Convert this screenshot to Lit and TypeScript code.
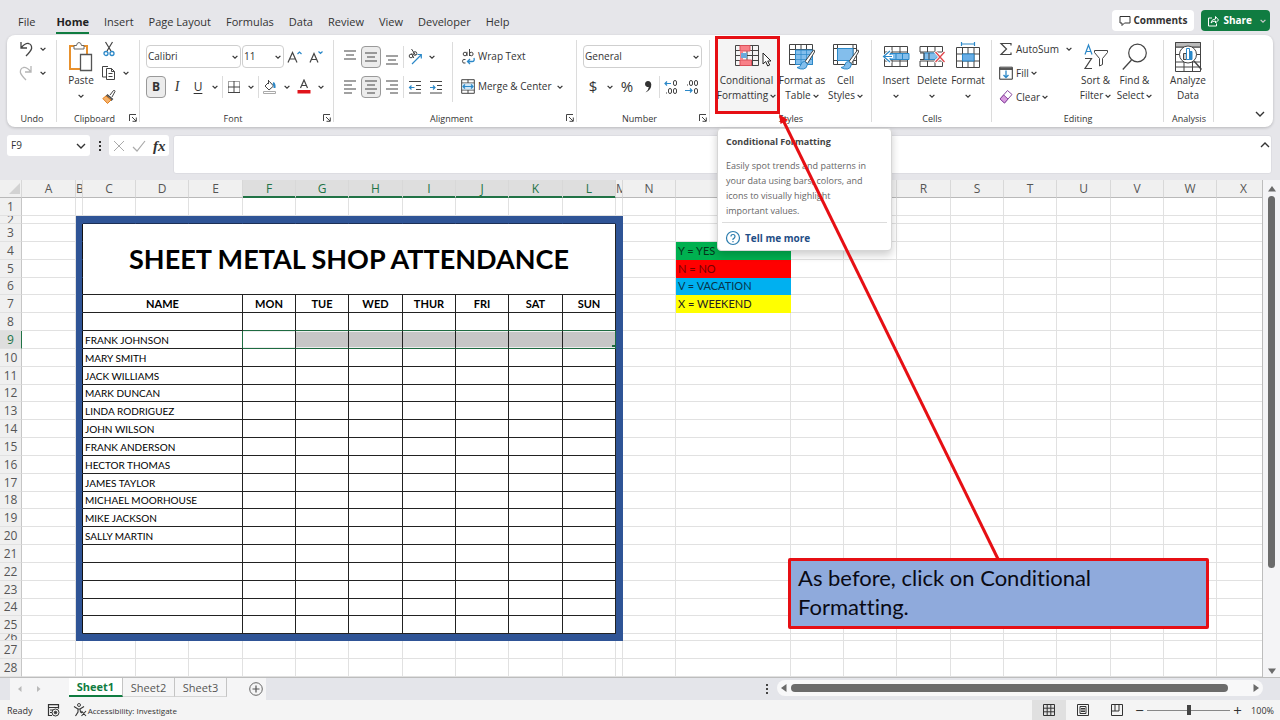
import { LitElement, html, svg, css, nothing, TemplateResult } from "lit";
import { customElement, state } from "lit/decorators.js";
import { classMap } from "lit/directives/class-map.js";

const INK = "#444";
const BLUE = "#2b88c8";
const SKY = "#83beec";

const icon = (w: number, h: number, body: unknown) => html`
  <svg width=${w} height=${h} viewBox="0 0 ${w} ${h}" fill="none" stroke=${INK} stroke-width="1" aria-hidden="true">${body}</svg>`;

const chevron = (w = 6) => html`
  <svg width=${w} height=${w} viewBox="0 0 6 6" fill="none" stroke="#333" stroke-width=${w > 6 ? 0.8 : 1.2} aria-hidden="true">
    <path d="M.6 1.8 3 4.2 5.4 1.8" />
  </svg>`;

const lines = (rows: number[][]) =>
  icon(14, 16, svg`<path stroke-width="1.2" d=${rows.map(([x, y, w]) => `M${x} ${y}h${w}`).join("")} />`);

const grid24 = svg`<path d="M.5 .5h23v20H.5zM.5 5.5h23M.5 10.5h23M.5 15.5h23M6.5 .5v20M12 .5v20M17.5 .5v20" />`;
const brush = svg`
  <path d="M24.500 6 L16 17.500 L18.500 19.500 L25.500 8 Q25.800 5.500 24.500 6z" fill="#fff" />
  <path d="M15.500 17.500q-3 0-3.500 3t-4 3q3 2 6.500 1.500t4-5z" fill="${SKY}" stroke="${BLUE}" />`;

const ICONS: Record<string, TemplateResult> = {
  undo: icon(16, 18, svg`<path stroke-width="1.3" d="M3 2v6h6M3.300 7.800Q7 3 10.500 3.500 14 4.500 13.600 8.500 13 11 8 16" />`),
  redo: icon(16, 18, svg`<path stroke="#b5b5b5" stroke-width="1.3" d="M13 2v6H7M12.700 7.800Q9 3 5.500 3.500 2 4.500 2.400 8.500 3 11 8 16" />`),
  paste: icon(26, 30, svg`
    <path d="M2 4h17v23H2z" fill="#fff" stroke="#e8912d" stroke-width="2" />
    <path d="M6 7V3.500h2.500q.5-3 2.500-3t2.500 3H16V7z" fill="#fff" stroke="#666" />
    <path d="M12.500 12.500h11v16h-11z" fill="#fff" stroke="#555" stroke-width="1.300" />`),
  cut: icon(12, 16, svg`<path stroke-width="1.200" d="M2.500 1 8 10M9.500 1 4 10" /><circle cx="3" cy="12.500" r="2" stroke="${BLUE}" stroke-width="1.300" /><circle cx="9" cy="12.500" r="2" stroke="${BLUE}" stroke-width="1.300" />`),
  copy: icon(16, 16, svg`<path d="M5 12H1.500V1.500h5.500M5.500 3.500h5l3 3v8h-8zM10.500 3.500v3h3M7.500 8.500h4M7.500 11.500h4" fill="#fff" />`),
  painter: icon(14, 16, svg`<path d="m8 6 3.500-4.500q1.500-.5 1.500 1L10 8" fill="#fff" /><path d="m5 5.500 6 5M4 6.500 10 11.500" stroke-width="1.200" /><path d="M4 7 .8 9.500l4.700 5L9 11z" fill="#f6b26b" stroke="#e07f1f" />`),
  growA: icon(18, 18, svg`<path stroke-width="1.200" d="M2 14.500 6.500 4.500 11 14.500M3.600 11h5.800" /><path stroke="${BLUE}" stroke-width="1.200" d="m11.500 6 2-2 2 2" />`),
  shrinkA: icon(18, 18, svg`<path stroke-width="1.200" d="M3 14.500 7 5.500 11 14.500M4.400 11.500h5.200" /><path stroke="${BLUE}" stroke-width="1.200" d="m11.500 3.500 2 2 2-2" />`),
  borders: icon(14, 14, svg`<path stroke-dasharray="1 1" d="M1.500 1.500h11v11h-11z" /><path d="M7 1v12M1 7h12M1 12.500h12" />`),
  fillColor: icon(16, 16, svg`<path d="m3 7 4.500-4.500L11.500 7 7 11zM6.500 1v4" fill="#fff" /><path d="M11 4q2 1 1.500 5" stroke="${BLUE}" stroke-width="2" /><path d="M1.500 12.500h12v2h-12z" fill="#fff" stroke="#aaa" />`),
  fontColor: icon(14, 16, svg`<path stroke-width="1.200" d="M3.500 9 7 1 10.500 9M4.700 6.500h4.600" /><path d="M.5 11h13v3.500H.5z" fill="#e0141b" stroke="none" />`),
  top: lines([[1, 2, 12], [3, 6, 8], [1, 10, 12]]),
  middle: lines([[1, 4, 12], [3, 8, 8], [1, 12, 12]]),
  bottom: lines([[1, 7, 12], [3, 11, 8], [1, 15, 12]]),
  left: lines([[1, 2, 12], [1, 6, 8], [1, 10, 12], [1, 14, 8]]),
  center: lines([[1, 2, 12], [3, 6, 8], [1, 10, 12], [3, 14, 8]]),
  right: lines([[1, 2, 12], [5, 6, 8], [1, 10, 12], [5, 14, 8]]),
  orient: icon(16, 16, svg`<circle cx="4" cy="7" r="1.800" /><path d="M4.500 4.500 6.800 9" /><circle cx="8" cy="4.500" r="1.800" /><path d="M4.500 0 8.500 6" /><path stroke="${BLUE}" stroke-width="1.200" d="M5 15 14 6M10.500 5.500H14.300V9.500" />`),
  outdent: icon(14, 14, svg`<path d="M1 1.500h12M8 5.500h5M8 9.500h5M1 13h12" /><path stroke="${BLUE}" stroke-width="1.200" d="M6.500 7.500H1.500M3.500 5.500l-2 2 2 2" />`),
  indent: icon(14, 14, svg`<path d="M1 1.500h12M8 5.500h5M8 9.500h5M1 13h12" /><path stroke="${BLUE}" stroke-width="1.200" d="M1 7.500h5M4 5.500l2 2-2 2" />`),
  wrap: icon(16, 16, svg`<circle cx="5" cy="5" r="1.800" /><path d="M7 2.800V7M9.500 0v7M5.500 10.500q-3-1-3 1.700t3 1.800" /><circle cx="11.300" cy="5" r="1.800" /><path stroke="${BLUE}" stroke-width="1.300" d="M14 9q1 3.500-2 3.500H8M10 10l-2.500 2.500L10 15" />`),
  merge: icon(14, 15, svg`<path d="M.7.700h12.600v13.600H.7zM.7 4h12.600M.7 11h12.600M7 .7V4M7 11v3.300" /><path d="M1.200 4.500h11.600v6H1.200z" fill="#cfe6f7" stroke="none" /><path stroke="${BLUE}" stroke-width="1.200" d="M2 7.500h10M4 5.500l-2 2 2 2M10 5.500l2 2-2 2" />`),
  incDec: icon(16, 16, svg`<path stroke="${BLUE}" stroke-width="1.200" d="M8 4.500H2M4 2.500l-2 2 2 2" /><rect x="10.500" y="1.500" width="3" height="5" rx="1.500" /><rect x="5.500" y="9.500" width="3" height="5" rx="1.500" /><rect x="10.500" y="9.500" width="3" height="5" rx="1.500" /><path d="M3 14h1" />`),
  decDec: icon(16, 16, svg`<path stroke="${BLUE}" stroke-width="1.200" d="M1 11.500h7M6 9.500l2 2-2 2" /><rect x="5.500" y="1.500" width="3" height="5" rx="1.500" /><rect x="10.500" y="1.500" width="3" height="5" rx="1.500" /><rect x="10.500" y="9.500" width="3" height="5" rx="1.500" /><path d="M3 6h1" />`),
  comma: icon(8, 14, svg`<path d="M4 1a3 3 0 1 0 .8 5.900Q4.500 10 1.500 12.500 7.500 10 7.300 4.500 7 1 4 1z" fill="#333" stroke="none" />`),
  conditional: icon(24, 24, svg`${grid24}<path d="M5 .5h10V6H5zM5 15h11.500v5.500H5z" fill="#f98088" stroke="#d9505a" /><path d="M5 6h3v9H5z" fill="#f98088" stroke="none" /><path d="M6 8h6v5H6z" fill="#6aa9dc" stroke="none" />`),
  formatTable: icon(26, 26, svg`${grid24}<path d="M6.500 6h17v14.500h-17z" fill="${SKY}" stroke="${BLUE}" /><path d="M12 6v14M17.500 6v14M6.500 10.500h17M6.500 15.500h17" stroke="${BLUE}" stroke-width=".7" />${brush}`),
  cellStyles: icon(26, 26, svg`<path d="M.5.500h23v20H.5zM4.500.500v20M20 .5v20M.5 4.500h23M.5 16.500h23" /><path d="M4.500 4.500H20v12H4.500z" fill="${SKY}" stroke="${BLUE}" />${brush}`),
  insert: icon(28, 22, svg`<path d="M2.500.500h23v20h-23zM2.500 6h23M2.500 15h23M10 .5v20M18 .5v20" /><path d="M8 7.500h19v6H8z" fill="${SKY}" stroke="${BLUE}" /><path d="M14 7.500v6M20.500 7.500v6" stroke="${BLUE}" /><path d="M9 4 2 10.500 9 17M2 10.500h9" stroke="#fff" stroke-width="3" /><path d="M8 5 1.500 10.500 8 16M1.500 10.500H10" stroke="${BLUE}" stroke-width="1.200" />`),
  remove: icon(28, 22, svg`<path d="M2 6V.5h22.500V6zM2 15v5.500h22.500V15zM9.500.500V6M17 .5V6M9.500 15v5.500M17 15v5.500" /><path d="M6 7h11l3 3.500-3 3H6z" fill="${SKY}" stroke="${BLUE}" /><path d="M11 7v6.500M2 7h4v6.500H2" /><path d="m17 5.500 10 11M27 5.500l-10 11" stroke="#fff" stroke-width="3" /><path d="m17.500 6 9 10M26.500 6l-9 10" stroke="#e0474c" stroke-width="1.300" />`),
  format: icon(26, 30, svg`<path d="M6.500 2h13M6.500 0v4M19.500 0v4" stroke="${BLUE}" stroke-width="1.200" /><path d="M1.500 5.500h23v20h-23zM1.500 12h23M1.500 19h23M7.500 5.500v20M19 5.500v20M13 5.500V12M13 19v6.500" /><path d="M7.500 12H19v7H7.500z" fill="#6aaee6" stroke="${BLUE}" />`),
  sum: icon(14, 14, svg`<path stroke-width="1.200" d="M12 3.500V1.500H2L7.500 7 2 12.500h10v-2" />`),
  fillDown: icon(14, 14, svg`<path d="M.7 1.200h12.600v12H.7z" stroke="#333" /><path d="M.7 3h12.600" stroke-width="1.800" /><path stroke="${BLUE}" stroke-width="1.300" d="M7 4.500v7M4.500 9 7 11.500 9.500 9" />`),
  clear: icon(14, 16, svg`<path d="m1 10 7.500-8.500 4.500 4L5.500 14z" fill="#fff" stroke="#8a4aa0" /><path d="m1 10 3.700-4L9 10l-3.500 4z" fill="#d99ae0" stroke="#8a4aa0" />`),
  sort: icon(26, 28, svg`<path stroke="${BLUE}" stroke-width="1.200" d="M2 11.500 5.500 2 9 11.500M3.200 8.500h4.600" /><path stroke-width="1.200" d="M2 15.500h6.500L2 25.500h7" /><path d="M11.500 7.500h13v2l-5 6v6l-3 1.500v-7.500l-5-6z" fill="#fff" />`),
  find: icon(26, 28, svg`<circle cx="15.500" cy="10" r="8.800" stroke-width="1.200" /><path stroke-width="1.300" d="M9.500 17 .8 26.500" />`),
  analyze: icon(28, 30, svg`<path d="M1.500.500h25v29h-25zM1.500 5h25M1.500 12.500h25M1.500 20h25M1.500 25h25M10 20v9.500M18.500 20v9.500" /><path d="M1.500.500h25V5h-25z" fill="#bbb" /><circle cx="14" cy="12.500" r="8.500" fill="#fff" /><path d="M9.500 11.500h3v6h-3z" fill="#ccc" /><path d="M12.500 6.500h3v11h-3z" fill="#fff" stroke="${BLUE}" /><path d="M15.500 9.500H18v8h-2.500z" fill="${BLUE}" stroke="${BLUE}" /><path stroke-width="1.400" d="m20 19 7.500 8.500" />`),
  launcher: icon(8, 8, svg`<path d="M.5 7V.5H7M3 3l4 4M7.300 3.500v3.800H3.500" />`),
  help: icon(16, 16, svg`<circle cx="8" cy="8" r="6.500" stroke="#2b7cad" stroke-width="1.200" /><path stroke="#2b7cad" stroke-width="1.200" d="M6 6.500Q6 4.500 8 4.500t2 2Q10 8 8 9v1M8 11v1.300" />`),
  pointer: icon(10, 15, svg`<path d="M1 1v11l2.700-2.500L5.700 14l2-1-2-4H9z" fill="#fff" stroke="#222" />`),
  comment: icon(12, 12, svg`<path d="M1 1.500h10v6.500H5.500L3 10.500V8H1z" stroke="#333" />`),
  share: icon(12, 12, svg`<path stroke="#fff" d="M5 3H1.500v8h8V8.500M4 8q.5-4 4.500-4V1.500L11.500 5 8.500 8V6Q5.500 6 4 8z" />`),
  cross: icon(12, 12, svg`<path stroke="#aaa" d="m1 1 10 10M11 1 1 11" />`),
  tick: icon(14, 12, svg`<path stroke="#aaa" stroke-width="1.200" d="m1 7 4 4L13 1" />`),
  record: icon(13, 13, svg`<path d="M5 11.500H1.500V.700h10v4M1.500 3.500h10M3 6h3M3 8.500h2" stroke="#333" stroke-width="1.200" /><circle cx="8.500" cy="8.500" r="3.500" stroke="#333" /><circle cx="8.500" cy="8.500" r="1.300" fill="#333" />`),
  access: icon(14, 14, svg`<circle cx="6" cy="2" r="1.500" /><path stroke="#333" stroke-width="1.100" d="M1 3.500 5 6v3L2.500 13M11 3.500 7 6l.500 3L9 10M5 6h2M8.500 8l4.500 5M13 8l-4.500 5" />`),
  add: icon(14, 14, svg`<circle cx="7" cy="7" r="6.300" stroke="#666" /><path stroke="#555" stroke-width="1.200" d="M7 3.500v7M3.500 7h7" />`),
  viewNormal: icon(12, 12, svg`<path stroke="#333" d="M.5.500h11v11H.5zM.5 4.200h11M.5 7.800h11M4.200.500v11M7.800.500v11" />`),
  viewPage: icon(12, 12, svg`<path stroke="#333" d="M.5.500h11v11H.5zM3 2.500h6v7H3zM4 4.500h4M4 6h4M4 7.500h4" />`),
  viewBreak: icon(12, 12, svg`<path stroke="#333" d="M.5.500h11v11H.5zM4 .5V7M8 .5V7M.5 7H8" />`),
};

const COLS = "ABCDEFGHIJKLMNOPQRSTUVWXYZ".split("");
const COL_W: Record<string, number> = {
  A: 54, B: 7, C: 53, D: 53, E: 54, F: 53, G: 53, H: 54, I: 53, J: 53, K: 54, L: 53, M: 7, N: 53, O: 115,
};
const DAYS: Record<string, string> = { F: "MON", G: "TUE", H: "WED", I: "THUR", J: "FRI", K: "SAT", L: "SUN" };
const NAMES = [
  "FRANK JOHNSON", "MARY SMITH", "JACK WILLIAMS", "MARK DUNCAN", "LINDA RODRIGUEZ", "JOHN WILSON",
  "FRANK ANDERSON", "HECTOR THOMAS", "JAMES TAYLOR", "MICHAEL MOORHOUSE", "MIKE JACKSON", "SALLY MARTIN",
];
const LEGEND: Record<number, [string, string]> = {
  4: ["Y = YES", "yes"], 5: ["N = NO", "no"], 6: ["V = VACATION", "vac"], 7: ["X = WEEKEND", "wkd"],
};

const rowHeight = (r: number) => {
  if (r === 1) return 18;
  if (r === 2) return 8;
  if (r === 26) return 7;
  const k = r < 26 ? r - 2 : r - 3;
  return Math.round(17.84 * k) - Math.round(17.84 * (k - 1));
};

@customElement("sheet-grid")
export class SheetGrid extends LitElement {
  static styles = css`
    :host { display: block; overflow: hidden; background: #fff; font-family: "Lato", "Liberation Sans", sans-serif; }
    table { table-layout: fixed; border-collapse: separate; border-spacing: 0; }
    th, td { padding: 0; box-sizing: border-box; border: 0 solid #e1e1e1; border-width: 0 1px 1px 0; overflow: hidden; white-space: nowrap; }
    .col, .num { font: 400 12px/16px "Open Sans", "Noto Sans", sans-serif; color: #555; background: #f0f0f0; text-align: center; }
    .col { height: 18px; border-bottom-color: #b9b9b9; border-right-color: #d8d8d8; }
    .col.on { background: #dedede; color: #217346; border-bottom-color: #217346; box-shadow: inset 0 -1px #217346; }
    .num { border-right-color: #c6c6c6; }
    .num.on { background: #dedede; color: #217346; border-right-color: #217346; }
    .clip { display: flex; align-items: center; justify-content: center; overflow: hidden; }
    .corner { background: #f0f0f0; }
    .corner svg { display: block; margin-left: auto; }
    .blue { background: #2f5496; border-color: #2f5496; }
    .edge { border-right-color: #111; }
    .over { border-bottom-color: #1c2f55; }
    .box { border-color: #222; font-size: 11px; line-height: 16px; color: #000; }
    .name { padding-left: 2px; text-align: left; font-size: 10px; }
    .day { text-align: center; font-weight: 700; }
    .title { font-size: 27px; line-height: 36px; font-weight: 700; text-align: center; color: #000; border-color: #222; }
    .below { border-bottom-color: #1e6b41; }
    .sel { background: #c6c6c6; border-bottom-color: #1e6b41; box-shadow: inset 0 1px #eee, inset 0 -1px #eee; }
    .first { background: #fff; }
    .before { border-right-color: #1e6b41; }
    .key { padding-left: 2px; font-size: 11px; line-height: 16px; color: #222; border-color: transparent; background-clip: border-box; }
    .yes { background: #00b050; color: #04351b; }
    .no { background: #f00; color: #700; }
    .vac { background: #00b0f0; color: #08344a; }
    .wkd { background: #ff0; }
    .last { border-right-color: #1e6b41; background: linear-gradient(#1e6b41, #1e6b41) right bottom / 3px 3px no-repeat #c6c6c6; }
  `;

  @state() private width = window.innerWidth;
  @state() private height = window.innerHeight;
  private onResize = () => { this.width = window.innerWidth; this.height = window.innerHeight; };
  connectedCallback() { super.connectedCallback(); window.addEventListener("resize", this.onResize); }
  disconnectedCallback() { window.removeEventListener("resize", this.onResize); super.disconnectedCallback(); }

  private cell(r: number, c: string) {
    const inBody = c >= "C" && c <= "L";
    if (inBody && r >= 3 && r <= 6) {
      return r === 3 && c === "C" ? html`<td class="title" colspan="10" rowspan="4">SHEET METAL SHOP ATTENDANCE</td>` : nothing;
    }
    if (c >= "C" && c <= "E" && r >= 7 && r <= 25) {
      if (c !== "C") return nothing;
      if (r === 7) return html`<th class="box day" colspan="3">NAME</th>`;
      return html`<td class=${classMap({ box: true, name: true, before: r === 9 })} colspan="3">${NAMES[r - 9] ?? ""}</td>`;
    }
    if (inBody && r >= 7 && r <= 25) {
      if (r === 7) return html`<th class="box day">${DAYS[c]}</th>`;
      return html`<td class=${classMap({ box: true, below: r === 8, sel: r === 9, first: r === 9 && c === "F", last: r === 9 && c === "L" })}></td>`;
    }
    if (c >= "B" && c <= "M" && r >= 2 && r <= 26) {
      return html`<td class=${classMap({ blue: true, edge: c === "B" && r > 2 && r < 26, over: r === 2 && inBody })}></td>`;
    }
    if (c === "O" && LEGEND[r]) return html`<td class="key ${LEGEND[r][1]}">${LEGEND[r][0]}</td>`;
    return html`<td></td>`;
  }

  render() {
    const widths: [string, number][] = [];
    let total = 22;
    for (let i = 0; total < this.width - 16; i++) {
      const name = i < 26 ? COLS[i] : "A" + COLS[(i - 26) % 26];
      const w = (name.length === 1 ? COL_W[name] : 0) || (i % 3 === 2 ? 54 : 53);
      widths.push([name, w]);
      total += w;
    }
    const rows: number[] = [];
    for (let r = 1, y = 198; y + rowHeight(r) < this.height - 42; r++) { rows.push(r); y += rowHeight(r); }
    return html`
      <table style="width:${total}px">
        <colgroup><col style="width:22px" />${widths.map(([, w]) => html`<col style="width:${w}px" />`)}</colgroup>
        <thead><tr>
          <th class="col corner"><svg width="12" height="13" viewBox="0 0 12 13"><path d="M11 1v11H0z" fill="#d2d2d2" /></svg></th>
          ${widths.map(([n]) => html`<th class=${classMap({ col: true, on: n.length === 1 && n >= "F" && n <= "L" })}>${n}</th>`)}
        </tr></thead>
        <tbody>
          ${rows.map((r) => html`<tr style="height:${rowHeight(r)}px">
            <th class=${classMap({ num: true, on: r === 9 })}><div class="clip" style="height:${rowHeight(r) - 1}px">${r}</div></th>
            ${widths.map(([n]) => (n.length === 1 ? this.cell(r, n) : html`<td></td>`))}
          </tr>`)}
        </tbody>
      </table>`;
  }
}

@customElement("app-root")
export class AppRoot extends LitElement {
  static styles = css`
    * { box-sizing: border-box; }
    :host { display: flex; flex-direction: column; position: relative; height: 100vh; overflow: hidden; background: #e6e6ea; color: #333; font: 10px/15px "Open Sans", "Noto Sans", sans-serif; }
    button, input, select { font: inherit; color: inherit; background: none; border: 0; padding: 0; margin: 0; }
    button { display: inline-flex; align-items: center; justify-content: center; }
    svg { display: block; flex: none; }
    .menu { display: flex; align-items: flex-end; height: 35px; padding: 0 10px 1px 18px; }
    .tabs { display: flex; gap: 15px; font-size: 11px; line-height: 20px; }
    .tabs button { padding-top: 1px; border-bottom: 2px solid transparent; height: 24px; white-space: nowrap; }
    .tabs .on { font-weight: 700; color: #222; border-color: #107c41; }
    .tabs button:first-child { margin-right: 6px; }
    .actions { display: flex; gap: 7px; margin-left: auto; padding-bottom: 3px; font-weight: 700; }
    .actions button { height: 21px; padding: 0 7px; border-radius: 4px; background: #fff; gap: 2px; }
    .actions .share { background: #107c41; color: #fff; gap: 4px; padding: 0 4px 0 6px; }
    .share .arrow { margin-left: 4px; filter: invert(1); }
    .ribbon { display: flex; height: 92px; margin: 0 7px; background: #fff; border-radius: 8px; box-shadow: 0 1px 3px #0003; position: relative; z-index: 2; }
    .group { display: flex; flex-direction: column; flex: none; padding-top: 2px; position: relative; }
    .group::after { content: ""; position: absolute; right: 0; top: 5px; bottom: 5px; width: 1px; background: #dcdcdc; }
    .body { display: flex; height: 72px; padding-left: 6px; }
    .label { display: flex; align-items: center; height: 18px; font-size: 9px; padding: 0 3px; }
    .label span { flex: 1; text-align: center; }
    .w50 { width: 50px; } .w83 { width: 83px; } .w120 { width: 120px; } .w133 { width: 133px; } .w162 { width: 162px; }
    .w172 { width: 172px; } .w194 { width: 194px; } .w243 { width: 243px; }
    .rest { flex: 1; display: flex; align-items: flex-end; justify-content: flex-end; padding: 0 8px 8px 0; }
    .three { display: grid; grid-template-rows: repeat(3, 24px); align-items: center; }
    .history { padding-left: 3px; }
    .two { display: grid; grid-template-rows: repeat(2, 23px); gap: 7px; padding-top: 8px; align-items: center; align-content: start; }
    .line { display: flex; align-items: center; gap: 1px; }
    .ib { width: 20px; height: 22px; }
    .cv { width: 12px; height: 22px; }
    .pressed { background: #ececec; border: 1px solid #999; border-radius: 4px; }
    .sep { width: 1px; height: 22px; background: #dcdcdc; }
    .tall { width: 1px; height: 60px; margin-top: 5px; background: #dcdcdc; }
    .glyph { font-size: 12px; }
    .serif { font-family: "Liberation Serif", serif; font-style: italic; font-size: 14px; }
    .under { text-decoration: underline; text-underline-offset: 2px; }
    .heavy { font-weight: 700; }
    .money { font-size: 15px; }
    .leftcol { width: 112px; }
    .rightcol { width: 113px; padding-left: 7px; }
    .rightcol .line { gap: 0; }
    .txt { gap: 2px; white-space: nowrap; justify-content: flex-start; height: 22px; }
    .txt .pic { width: 16px; display: flex; justify-content: center; }
    .push { margin-left: auto; }
    .combo { display: grid; height: 23px; border: 1px solid #cfcfcf; border-radius: 4px; align-items: center; background: #fff; }
    .combo select { grid-area: 1 / 1; appearance: none; width: 100%; padding-left: 1px; outline: 0; }
    .combo svg { grid-area: 1 / 1; justify-self: end; margin-right: 2px; pointer-events: none; }
    .c95 { width: 95px; } .c42 { width: 42px; } .c119 { width: 119px; }
    .big { flex-direction: column; justify-content: flex-start; padding-top: 5px; height: 76px; text-align: center; position: relative; }
    .big .pic { display: flex; align-items: center; justify-content: center; height: 30px; margin-bottom: 1px; }
    .big .word { display: flex; flex-direction: column; align-items: center; white-space: nowrap; }
    .big .ln { display: flex; align-items: center; justify-content: center; gap: 2px; height: 15px; }
    .b36 { width: 36px; } .b39 { width: 39px; } .b48 { width: 48px; } .b61 { width: 61px; }
    .edit { width: 78px; }
    .edit .line { gap: 3px; }
    .edit .fit { margin-left: auto; margin-right: 1px; }
    .cond { position: relative; background: #f4f4f4; height: 75px; z-index: 1; margin-right: 1px; }
    .cond > .frame { position: absolute; inset: -1px -3px -2px -1px; border: 3px solid #e60f14; pointer-events: none; }
    .cond > .ptr { position: absolute; left: 46px; top: 15px; pointer-events: none; }
    .tip { position: absolute; left: 1px; top: 91px; width: 175px; padding: 5px 8px 3px; background: #fff; border: 1px solid #d6d6d6; border-radius: 4px; box-shadow: 0 4px 8px #0003; color: #666; }
    .tip h2 { margin: 0 0 9px; font-size: 9px; line-height: 15px; color: #444; white-space: nowrap; }
    .tip p { margin: 0 0 4px; font-size: 9px; line-height: 15px; white-space: nowrap; }
    .tip a { display: flex; align-items: center; gap: 4px; margin: 0 -4px; padding: 7px 4px 1px; border-top: 1px solid #dcdcdc; color: #1f4e86; font-weight: 700; text-decoration: none; }
    .tip a svg { margin-left: -1px; }
    .formula { display: flex; align-items: flex-start; height: 53px; padding: 8px 8px 0 7px; }
    .namebox { display: flex; align-items: center; width: 83px; height: 21px; background: #fff; border-radius: 3px; padding: 0 4px; }
    .namebox input { flex: 1; min-width: 0; outline: 0; }
    .dots { width: 19px; height: 21px; display: grid; place-content: center; gap: 2px; }
    .dots i { width: 2px; height: 2px; background: #333; }
    .fx { display: flex; align-items: center; justify-content: space-around; width: 60px; height: 21px; background: #fff; border-radius: 3px; }
    .fx .f { font: italic 700 15px/20px "Liberation Serif", serif; }
    .entry { display: flex; flex: 1; margin-left: 4px; height: 39px; background: #fff; border-radius: 3px; border: 1px solid #dddde2; }
    .entry input { flex: 1; min-width: 0; align-self: flex-start; height: 20px; padding-left: 4px; outline: 0; }
    .entry button { align-self: flex-start; margin: 4px 1px; }
    .flip { transform: rotate(180deg); }
    .stage { display: flex; flex: 1; min-height: 0; border-bottom: 1px solid #bdbdbd; }
    .stage sheet-grid { flex: 1; min-width: 0; border-right: 1px solid #bdbdbd; }
    .vbar { display: flex; flex-direction: column; align-items: center; width: 17px; background: #f4f4f6; padding: 5px 0 2px; gap: 3px; }
    .vbar .thumb { width: 7px; border-radius: 4px; background: #6b6b6b; flex: 80; }
    .vbar .space { flex: 20; }
    .sheets { display: flex; height: 22px; align-items: stretch; background: #e4e5ea; font-size: 11px; padding-right: 17px; }
    .strip { display: flex; background: #f5f5f6; margin-left: 10px; width: 256px; }
    .nav { display: flex; width: 59px; align-items: center; gap: 11px; padding-left: 6px; }
    .strip .tab { width: 52px; height: 19px; border-right: 1px solid #c4c4c4; border-bottom: 1px solid #d5d5d5; color: #555; }
    .strip .tab.on { width: 54px; background: #fff; color: #107c41; font-weight: 700; border-bottom: 2px solid #107c41; }
    .strip .plus { margin-left: 22px; }
    .hbar { display: flex; align-items: center; margin: 2px 0 4px; width: 486px; background: #f8f8f9; border-radius: 8px; gap: 3px; padding: 0 3px; }
    .hbar .thumb { height: 8px; border-radius: 4px; background: #6b6b6b; flex: 96; }
    .hbar .space { flex: 4; }
    .more { margin: 6px 9px 0 auto; display: grid; gap: 2px; align-content: start; }
    .more i { width: 2px; height: 2px; background: #444; }
    .status { display: flex; align-items: center; height: 20px; background: #f4f4f4; padding: 0 6px 0 7px; font-size: 9px; }
    .status .rec { margin: 0 13px 0 14px; }
    .status .acc { gap: 1px; font-size: 8px; }
    .views { display: flex; margin-left: auto; }
    .views button { width: 34px; height: 20px; }
    .views .on { background: #e0e0e0; }
    .zoom { display: flex; align-items: center; gap: 2px; }
    .zoom button { width: 11px; height: 16px; font-size: 15px; }
    .zoom input { appearance: none; width: 83px; height: 14px; background: linear-gradient(#888, #888) center / 100% 1px no-repeat; }
    .zoom input::-webkit-slider-thumb { appearance: none; width: 4px; height: 10px; background: #444; }
    .zoom output { margin-left: 6px; }
    .arrowline { position: absolute; left: 778px; top: 113px; z-index: 3; pointer-events: none; }
    .note { position: absolute; left: 788px; top: 558px; width: 421px; z-index: 4; margin: 0; padding: 2px 7px 5px; background: #8faadc; border: 3px solid #e60f14; color: #0a0a14; font: 22px/29px "Lato", "Liberation Sans", sans-serif; font-variant-ligatures: none; border-radius: 2px; }
  `;

  private group(label: string, width: string, body: unknown, launcher = false) {
    return html`<section class="group ${width}" aria-label=${label}>
      <div class="body">${body}</div>
      <div class="label"><span>${label}</span>${launcher ? html`<button aria-label="${label} settings">${ICONS.launcher}</button>` : nothing}</div>
    </section>`;
  }
  private ib(name: string, extra = "") {
    return html`<button class="ib ${extra}" aria-label=${name}>${ICONS[name]}</button>`;
  }
  private cv(extra = "") {
    return html`<button class="cv ${extra}" aria-label="More options">${chevron()}</button>`;
  }
  private txt(name: string, label: string, drop = false) {
    return html`<button class="txt"><span class="pic">${ICONS[name]}</span>${label}${drop ? chevron() : nothing}</button>`;
  }
  private big(name: string, width: string, first: string, second = "", drop = true) {
    return html`<button class="big ${width}"><span class="pic">${ICONS[name]}</span>
      <span class="word"><span class="ln">${first}</span><span class="ln">${second}${drop ? chevron() : nothing}</span></span></button>`;
  }
  private combo(label: string, value: string, width: string) {
    return html`<span class="combo ${width}"><select aria-label=${label}><option>${value}</option></select>${chevron()}</span>`;
  }

  private ribbon() {
    return html`<div class="ribbon">
      ${this.group("Undo", "w50", html`<div class="three history">
        <div class="line">${this.ib("undo")}${this.cv()}</div>
        <div class="line">${this.ib("redo")}${this.cv()}</div></div>`)}
      ${this.group("Clipboard", "w83", html`${this.big("paste", "b36", "Paste")}
        <div class="three"><div class="line">${this.ib("cut")}</div>
          <div class="line">${this.ib("copy")}${this.cv()}</div>
          <div class="line">${this.ib("painter")}</div></div>`, true)}
      ${this.group("Font", "w194", html`<div class="two">
        <div class="line">${this.combo("Font", "Calibri", "c95")}${this.combo("Font size", "11", "c42")}${this.ib("growA")}${this.ib("shrinkA")}</div>
        <div class="line"><button class="ib glyph heavy pressed">B</button><button class="ib serif">I</button><button class="ib glyph under">U</button>${this.cv()}
          <span class="sep"></span>${this.ib("borders")}${this.cv()}<span class="sep"></span>${this.ib("fillColor")}${this.cv()}${this.ib("fontColor")}${this.cv()}</div>
        </div>`, true)}
      ${this.group("Alignment", "w243", html`<div class="two leftcol">
          <div class="line">${this.ib("top")}${this.ib("middle", "pressed")}${this.ib("bottom")}<span class="sep"></span>${this.ib("orient")}${this.cv()}</div>
          <div class="line">${this.ib("left")}${this.ib("center", "pressed")}${this.ib("right")}<span class="sep"></span>${this.ib("outdent")}${this.ib("indent")}</div>
        </div><span class="tall"></span>
        <div class="two rightcol"><div class="line">${this.txt("wrap", "Wrap Text")}</div>
          <div class="line">${this.txt("merge", "Merge & Center")}${this.cv("push")}</div></div>`, true)}
      ${this.group("Number", "w133", html`<div class="two">
        <div class="line">${this.combo("Number format", "General", "c119")}</div>
        <div class="line"><button class="ib money">$</button>${this.cv()}<button class="ib money">%</button>${this.ib("comma")}<span class="sep"></span>${this.ib("incDec")}${this.ib("decDec")}</div>
        </div>`, true)}
      ${this.group("Styles", "w162", html`
        <div class="cond">${this.big("conditional", "b61", "Conditional", "Formatting")}
          <span class="ptr">${ICONS.pointer}</span>
          <div class="tip" role="tooltip"><h2>Conditional Formatting</h2>
            <p>Easily spot trends and patterns in<br />your data using bars, colors, and<br />icons to visually highlight<br />important values.</p>
            <a href="#help">${ICONS.help}Tell me more</a></div>
          <span class="frame"></span></div>
        ${this.big("formatTable", "b48", "Format as", "Table")}${this.big("cellStyles", "b39", "Cell", "Styles")}`)}
      ${this.group("Cells", "w120", html`${this.big("insert", "b36", "Insert")}${this.big("remove", "b36", "Delete")}${this.big("format", "b36", "Format")}`)}
      ${this.group("Editing", "w172", html`<div class="three edit">
          <div class="line">${this.txt("sum", "AutoSum")}${this.cv("fit")}</div>
          <div class="line">${this.txt("fillDown", "Fill", true)}</div>
          <div class="line">${this.txt("clear", "Clear", true)}</div></div>
        ${this.big("sort", "b39", "Sort &", "Filter")}${this.big("find", "b39", "Find &", "Select")}`)}
      ${this.group("Analysis", "w50", html`${this.big("analyze", "b36", "Analyze", "Data", false)}`)}
      <div class="rest"><button aria-label="Collapse ribbon">${chevron(10)}</button></div>
    </div>`;
  }

  render() {
    const tabs = ["File", "Home", "Insert", "Page Layout", "Formulas", "Data", "Review", "View", "Developer", "Help"];
    const tri = (d: string, c = "#6b6b6b") => html`<svg width="8" height="8" viewBox="0 0 8 8"><path d=${d} fill=${c} /></svg>`;
    return html`
      <header class="menu">
        <nav class="tabs">${tabs.map((t) => html`<button class=${t === "Home" ? "on" : ""}>${t}</button>`)}</nav>
        <div class="actions"><button>${ICONS.comment}Comments</button>
          <button class="share">${ICONS.share}Share<span class="arrow">${chevron()}</span></button></div>
      </header>
      ${this.ribbon()}
      <div class="formula">
        <div class="namebox"><input aria-label="Name box" value="F9" /><button aria-label="Names">${chevron(10)}</button></div>
        <span class="dots"><i></i><i></i><i></i></span>
        <div class="fx"><button aria-label="Cancel">${ICONS.cross}</button><button aria-label="Enter">${ICONS.tick}</button><button class="f">fx</button></div>
        <div class="entry"><input aria-label="Formula" /><button class="flip" aria-label="Collapse formula bar">${chevron(10)}</button></div>
      </div>
      <main class="stage"><sheet-grid></sheet-grid>
        <div class="vbar">${tri("M0 6.500 4 1 8 6.500z")}<span class="thumb"></span><span class="space"></span>${tri("M0 1.500 4 7 8 1.500z")}</div></main>
      <div class="sheets">
        <div class="strip"><span class="nav">${tri("M5.500 1v6L2 4z", "#b9b9b9")}${tri("M2 1v6l3.500-3z", "#b9b9b9")}</span>
          <button class="tab on">Sheet1</button><button class="tab">Sheet2</button><button class="tab">Sheet3</button>
          <button class="plus" aria-label="New sheet">${ICONS.add}</button></div>
        <span class="more"><i></i><i></i><i></i></span>
        <div class="hbar">${tri("M6.500 0v8L1 4z")}<span class="thumb"></span><span class="space"></span>${tri("M1.500 0v8L7 4z")}</div>
      </div>
      <footer class="status"><span>Ready</span><span class="rec">${ICONS.record}</span>
        <button class="acc">${ICONS.access}Accessibility: Investigate</button>
        <div class="views"><button class="on" aria-label="Normal">${ICONS.viewNormal}</button><button aria-label="Page layout">${ICONS.viewPage}</button><button aria-label="Page break">${ICONS.viewBreak}</button></div>
        <div class="zoom"><button aria-label="Zoom out">−</button><input type="range" aria-label="Zoom" min="0" max="200" value="100" /><button aria-label="Zoom in">+</button><output>100%</output></div>
      </footer>
      <svg class="arrowline" width="224" height="450" viewBox="0 0 224 450"><path d="M4 5 220 446" stroke="#e60f14" stroke-width="3" /><path d="M1 1 10 7 2.500 11z" fill="#e60f14" /></svg>
      <p class="note">As before, click on Conditional Formatting.</p>`;
  }
}
